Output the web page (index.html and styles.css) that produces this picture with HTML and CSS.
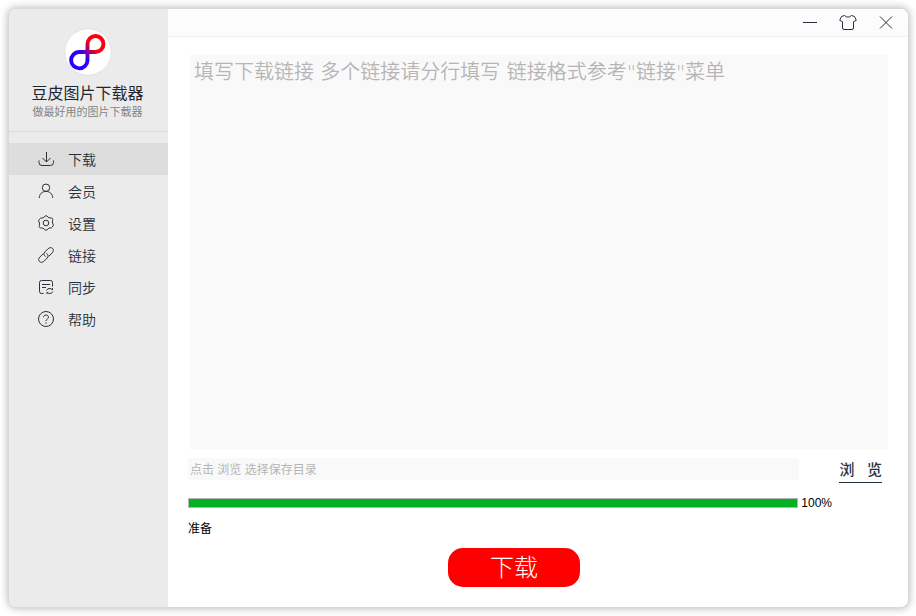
FILE: index.html
```
<!DOCTYPE html>
<html lang="zh-CN">
<head>
  <meta charset="UTF-8">
  <title>豆皮图片下载器</title>
  <link rel="stylesheet" href="styles.css">
</head>
<body>
  <div class="window">

    <!-- 左侧栏 -->
    <aside class="sidebar">
      <div class="brand">
        <svg class="logo" viewBox="0 0 48 48" aria-hidden="true">
          <defs>
            <linearGradient id="logoColor" gradientUnits="userSpaceOnUse" x1="19" y1="27" x2="29" y2="19">
              <stop offset="0" stop-color="#2a00ff"/>
              <stop offset="1" stop-color="#fa0010"/>
            </linearGradient>
          </defs>
          <circle cx="24" cy="24" r="23.2" fill="#fff" stroke="#e0e0e0" stroke-width=".8"/>
          <path d="M23 24H31.500A8 8 0 1 0 23.500 16V32.500A8.200 8.200 0 1 1 15 24Z" fill="none" stroke="url(#logoColor)" stroke-width="3.9" stroke-linejoin="round"/>
        </svg>
        <h1>豆皮图片下载器</h1>
        <p>做最好用的图片下载器</p>
      </div>

      <nav class="menu">
        <a class="active" href="#download">
          <svg viewBox="0 0 16 16"><path d="M8.500 1v10M4.500 7l4 4 4-4M1 9.500v2q0 3 3 3h8.500q3 0 3-3v-2"/></svg>
          下载
        </a>
        <a href="#member">
          <svg viewBox="0 0 16 16"><circle cx="8" cy="4.700" r="3.700"/><path d="M1.300 15c0-4 3-6.600 6.700-6.600s6.700 2.600 6.700 6.600"/></svg>
          会员
        </a>
        <a href="#settings">
          <svg viewBox="0 0 16 16"><circle cx="8" cy="8" r="2.800"/><path d="M6 2Q8-.9 10 2 10.800 3.200 12.200 2.900 15.600 2.700 14.600 5.800 14.100 7 14.600 8 16.400 10.500 14.400 12 13.600 13.300 12 13 10.700 12.800 10 14 8 16.900 6 14 5.300 12.800 4 13 .4 13.300 1.400 10.200 1.900 9 1.400 8-.4 5.500 1.600 4 2.400 2.700 4 3 5.300 3.200 6 2Z"/></svg>
          设置
        </a>
        <a href="#links">
          <svg viewBox="0 0 16 16"><path d="M10.500 9.500L14.200 5.900C17.300 2.600 13.400-1.300 10.100 1.700L6.900 4.900C5.300 6.700 5.800 8.600 7.600 9.500M5.500 6.500L1.800 10.100C-1.300 13.400 2.600 17.300 5.900 14.300L9.100 11.100C10.700 9.300 10.200 7.400 8.400 6.500"/></svg>
          链接
        </a>
        <a href="#sync">
          <svg viewBox="0 0 16 16"><path d="M5.500 14.500H3.500q-2 0-2-2v-9q0-2 2-2h9q2 0 2 2v4M4 5.500h8M4 8.500h4M8.500 11.500q1-2.500 3.500-2 1.800.3 2.500 1.500V9M14.800 12.500q-1 2.500-3.500 2-1.500-.3-2.300-1.300v1.800"/></svg>
          同步
        </a>
        <a href="#help">
          <svg viewBox="0 0 16 16"><circle cx="8" cy="8" r="7.500"/><path d="M5.500 6.300C5.500 4.800 6.600 4 8 4s2.500.9 2.500 2.200C10.500 8 8 8 8 10M8 11.300v1.400"/></svg>
          帮助
        </a>
      </nav>
    </aside>

    <!-- 右侧主区域 -->
    <main class="main">
      <header class="titlebar">
        <button type="button" aria-label="最小化">
          <svg viewBox="0 0 18 18"><path d="M2 8.500h14"/></svg>
        </button>
        <button type="button" aria-label="换肤">
          <svg viewBox="0 0 18 18"><path d="M5.500 1.500Q9 4.700 12.500 1.500L15.500 2.500 17.300 6.300 14.500 7.700V14Q14.500 15.500 13 15.500H5Q3.500 15.500 3.500 14V7.700L.7 6.300 2.500 2.500Z"/></svg>
        </button>
        <button type="button" aria-label="关闭">
          <svg viewBox="0 0 18 18"><path d="M3 2.500l12 12M15 2.500L3 14.500"/></svg>
        </button>
      </header>

      <form class="content">
        <textarea class="urls" aria-label="下载链接" placeholder='填写下载链接 多个链接请分行填写 链接格式参考"链接"菜单'></textarea>

        <div class="path-row">
          <input class="path" type="text" aria-label="保存目录" placeholder="点击 浏览 选择保存目录">
          <button class="browse" type="button">浏   览</button>
        </div>

        <div class="progress-row">
          <progress id="progress" value="100" max="100"></progress>
          <label for="progress">100%</label>
        </div>

        <div class="status">准备</div>
        <button class="start" type="button">下载</button>
      </form>
    </main>

  </div>
</body>
</html>
```
FILE: styles.css
```
* {
  box-sizing: border-box;
}

body {
  margin: 0;
  padding: 9px 8px 9px 9px;
  height: 100vh;
  background: #fff;
  color: #1f2733;
  font-family: "Liberation Sans", "Noto Sans CJK SC", sans-serif;
  font-size: 12px;
}

button,
input,
textarea {
  margin: 0;
  padding: 0;
  border: none;
  outline: none;
  background: none;
  color: inherit;
  font-family: inherit;
}

button {
  cursor: pointer;
}

svg {
  fill: none;
  stroke: #27313d;
  stroke-width: 1;
  flex: none;
}

.window {
  display: flex;
  height: 100%;
  border-radius: 7px;
  overflow: hidden;
  background: #fff;
  box-shadow: 0 0 0 1px #d8d8d8, 0 0 8px 1px rgba(0, 0, 0, 0.3);
}

/* 左侧栏 */
.sidebar {
  width: 159px;
  flex: none;
  background: #ebebeb;
}

.brand {
  display: flex;
  flex-direction: column;
  align-items: center;
  height: 123px;
  padding: 19px 2px 0 0;
  border-bottom: 1px solid #d9d9d9;
}

.logo {
  width: 48px;
  height: 48px;
}

.brand h1 {
  margin: 6px 0 0;
  font-size: 16px;
  font-weight: 400;
  line-height: 24px;
}

.brand p {
  margin: 0;
  color: #858585;
  font-size: 11px;
  line-height: 12px;
}

.menu {
  margin-top: 11px;
}

.menu a {
  display: flex;
  align-items: center;
  gap: 14px;
  height: 32px;
  padding-left: 29px;
  color: #27313d;
  font-size: 14px;
  font-weight: 350;
  text-decoration: none;
}

.menu a.active {
  background: #dddddd;
}

.menu svg {
  width: 16px;
  height: 16px;
}

/* 主区域 */
.main {
  flex: 1;
  display: flex;
  flex-direction: column;
  min-width: 0;
}

.titlebar {
  display: flex;
  justify-content: flex-end;
  gap: 20px;
  height: 28px;
  padding-right: 13px;
  background: #fcfcfc;
  border-bottom: 1px solid #f1f1f1;
}

.titlebar button {
  display: flex;
  align-items: center;
}

.titlebar svg {
  width: 18px;
  height: 18px;
}

.content {
  flex: 1;
  display: flex;
  flex-direction: column;
  padding: 18px 20px 20px;
}

.urls {
  flex: 1;
  margin-left: 2px;
  padding: 2px 4px;
  resize: none;
  background: #f9f9f9;
  font-family: "DejaVu Sans", "Noto Sans CJK SC", sans-serif;
  font-size: 20px;
  font-weight: 350;
  line-height: 30px;
}

.urls::placeholder,
.path::placeholder {
  color: #b5b5b5;
  opacity: 1;
}

.path-row {
  display: flex;
  gap: 40px;
  height: 25px;
  margin-top: 9px;
  padding-right: 6px;
}

.path {
  flex: 1;
  height: 22px;
  padding: 1px 2px 0;
  background: #f9f9f9;
  font-size: 12px;
}

.browse {
  border-bottom: 1px solid #27313d;
  color: #27313d;
  font-size: 15px;
  font-weight: 500;
  line-height: 24px;
  white-space: pre;
}

.progress-row {
  display: flex;
  align-items: center;
  gap: 3px;
  height: 14px;
  margin-top: 13px;
  padding-right: 56px;
  color: #000;
}

progress {
  flex: 1;
  height: 10px;
  min-width: 0;
  appearance: none;
  border: 1px solid #b5b5b5;
  background: #e6e6e6;
}

progress::-webkit-progress-bar {
  background: #e6e6e6;
}

progress::-webkit-progress-value {
  background: #06b025;
}

.status {
  margin-top: 10px;
  color: #000;
  line-height: 18px;
}

.start {
  align-self: center;
  width: 132px;
  height: 39px;
  margin: 10px 48px 0 0;
  padding-bottom: 4px;
  border-radius: 15px;
  background: #ff0000;
  color: #fff;
  font-size: 24px;
  font-weight: 300;
}
```
